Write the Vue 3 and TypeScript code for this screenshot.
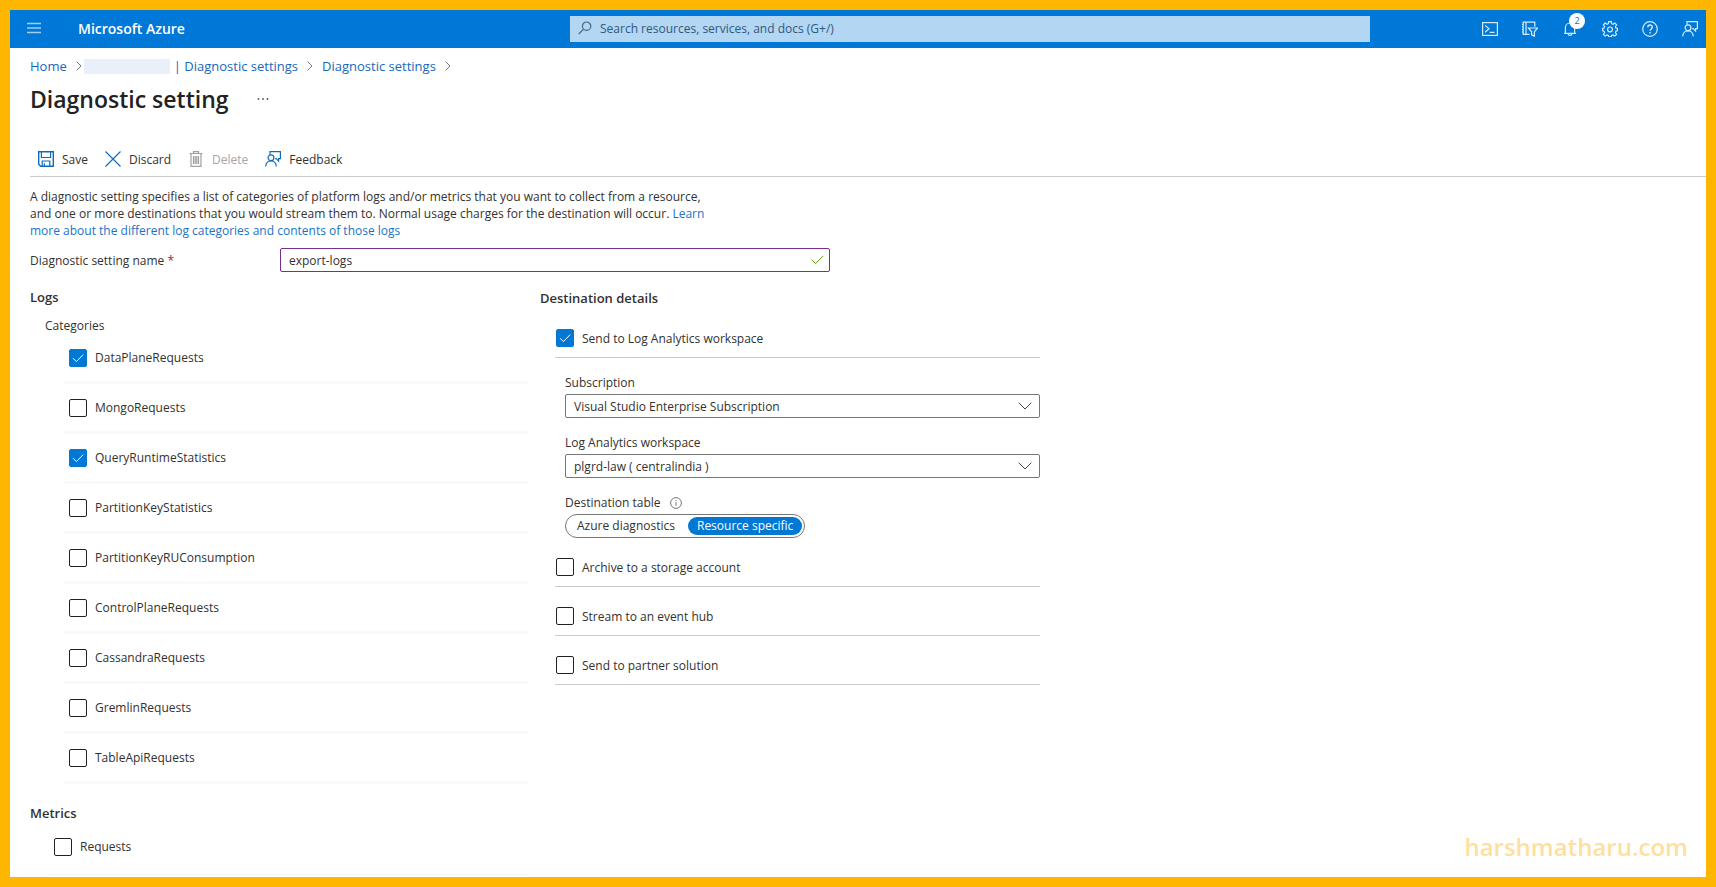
<script setup lang="ts">
import { ref } from 'vue'

interface Option {
  id: string
  label: string
  checked: boolean
}

const search = ref('')
const settingName = ref('export-logs')
const subscription = ref('Visual Studio Enterprise Subscription')
const workspace = ref('plgrd-law ( centralindia )')
const table = ref('resource')

const categories = ref<Option[]>([
  { id: 'data-plane', label: 'DataPlaneRequests', checked: true },
  { id: 'mongo', label: 'MongoRequests', checked: false },
  { id: 'query-runtime', label: 'QueryRuntimeStatistics', checked: true },
  { id: 'partition-key', label: 'PartitionKeyStatistics', checked: false },
  { id: 'partition-ru', label: 'PartitionKeyRUConsumption', checked: false },
  { id: 'control-plane', label: 'ControlPlaneRequests', checked: false },
  { id: 'cassandra', label: 'CassandraRequests', checked: false },
  { id: 'gremlin', label: 'GremlinRequests', checked: false },
  { id: 'table-api', label: 'TableApiRequests', checked: false },
])

const metrics = ref<Option[]>([{ id: 'requests', label: 'Requests', checked: false }])

const sendToWorkspace = ref(true)
const destinations = ref<Option[]>([
  { id: 'storage', label: 'Archive to a storage account', checked: false },
  { id: 'event-hub', label: 'Stream to an event hub', checked: false },
  { id: 'partner', label: 'Send to partner solution', checked: false },
])
</script>

<template>
  <div class="frame">
    <header class="topbar">
      <div class="brand">
        <button class="icon-button" type="button" aria-label="Show portal menu">
          <svg width="14" height="12" viewBox="0 0 14 12" fill="none" stroke="#9fcdf1" stroke-width="1.5">
            <path d="M0 1.5h14M0 6h14M0 10.5h14" />
          </svg>
        </button>
        <a class="brand-name" href="#">Microsoft Azure</a>
      </div>
      <label class="search">
        <svg width="14" height="14" viewBox="0 0 14 14" fill="none" stroke="#42688c" stroke-width="1.2">
          <circle cx="8.6" cy="5.2" r="4.2" />
          <path d="M5.6 8.2L0.8 13" />
        </svg>
        <input v-model="search" type="text" aria-label="Search" placeholder="Search resources, services, and docs (G+/)" />
      </label>
      <nav class="tools" aria-label="Portal tools">
        <button class="icon-button" type="button" aria-label="Cloud Shell">
          <svg viewBox="0 0 16 16">
            <rect x="0.6" y="1.6" width="14.8" height="12.8" />
            <path d="M3 4.4l4 3.4-4 3.4M7.6 11.4h5" />
          </svg>
        </button>
        <button class="icon-button" type="button" aria-label="Directories and subscriptions">
          <svg viewBox="0 0 16 16">
            <path d="M7.5 13.4H1.2V1.2h11.6v4.6M4 1.2v12.2M0 3.4h1.2M0 6h1.2M0 8.600h1.200M0 11.200h1.200" />
            <path d="M6.400 7h9.200L12.400 10.800v4.400l-2.800-1.400v-3z" />
          </svg>
        </button>
        <button class="icon-button bell" type="button" aria-label="Notifications, 2 new">
          <svg viewBox="0 0 16 16">
            <path d="M2 12.4h12M3.4 12.4V6.6a4.6 4.6 0 0 1 9.2 0v5.8M6 12.6c.4 2.4 3.6 2.4 4 0" />
          </svg>
          <span class="badge">2</span>
        </button>
        <button class="icon-button" type="button" aria-label="Settings">
          <svg viewBox="0 0 16 16">
            <path d="M6.700 0.700h2.600l.4 2 1.300.6 1.800-1.200 1.800 1.800-1.200 1.800.5 1.300 1.500.3v2.500l-1.500.4-.5 1.300 1.200 1.800-1.800 1.800-1.800-1.200-1.300.6-.4 1.300H6.700l-.4-1.300-1.300-.6-1.800 1.200-1.800-1.800 1.200-1.800-.6-1.300-1.300-.4V7.300l1.300-.3.6-1.300-1.200-1.800 1.800-1.800L5 3.300l1.300-.6z" />
            <circle cx="8" cy="8.400" r="2.400" />
          </svg>
        </button>
        <button class="icon-button" type="button" aria-label="Help">
          <svg viewBox="0 0 16 16">
            <circle cx="8" cy="8" r="7.300" />
            <path d="M5.800 6.300c0-3 4.500-2.900 4.500-.2 0 1.800-2.200 1.900-2.200 3.700M8.100 11v1.500" stroke-width="1.400" />
          </svg>
        </button>
        <button class="icon-button" type="button" aria-label="Feedback">
          <svg viewBox="0 0 16 16">
            <path d="M5 3.800V0.700h10.400v7h-1.800v2.400l-2.400-2.400h-1" />
            <circle cx="6" cy="6.700" r="2.900" />
            <path d="M0.700 15.500c.3-7.600 10.300-7.600 10.600 0" />
          </svg>
        </button>
      </nav>
    </header>

    <main class="page">
      <nav class="crumbs" aria-label="Breadcrumb">
        <a href="#">Home</a>
        <svg class="crumb-sep" viewBox="0 0 6 10"><path d="M0.700 0.700L5 5 0.700 9.300" /></svg>
        <span class="redacted"></span>
        <a href="#">| Diagnostic settings</a>
        <svg class="crumb-sep" viewBox="0 0 6 10"><path d="M0.700 0.700L5 5 0.700 9.300" /></svg>
        <a href="#">Diagnostic settings</a>
        <svg class="crumb-sep" viewBox="0 0 6 10"><path d="M0.700 0.700L5 5 0.700 9.300" /></svg>
      </nav>

      <div class="title-row">
        <h1>Diagnostic setting</h1>
        <button class="icon-button" type="button" aria-label="More">
          <svg width="12" height="4" viewBox="0 0 12 4" fill="#555">
            <circle cx="1.500" cy="2" r="0.900" /><circle cx="6" cy="2" r="0.900" /><circle cx="10.500" cy="2" r="0.900" />
          </svg>
        </button>
      </div>

      <div class="commands" role="toolbar">
        <button type="button">
          <svg viewBox="0 0 16 16">
            <path d="M0.700 0.700h14.600v14.600H2.700l-2-2z" stroke-width="1.400" />
            <path d="M3.400 0.700v5.800h9.200V0.700M4.200 15.300v-5.300h7.600v5.300M6.400 12.200v3" />
          </svg>
          Save
        </button>
        <button type="button">
          <svg viewBox="0 0 16 16"><path d="M0.500 0.500l15 15M15.500 0.500l-15 15" /></svg>
          Discard
        </button>
        <button type="button" disabled>
          <svg viewBox="0 0 16 16">
            <path d="M1.500 2.500h13M5.500 2.500V0.600h5v1.900M3 2.500v12.900h10V2.500M5.500 5v8M7.200 5v8M8.800 5v8M10.500 5v8" />
          </svg>
          Delete
        </button>
        <button type="button">
          <svg viewBox="0 0 16 16">
            <path d="M5 3.800V0.700h10.400v7h-1.800v2.400l-2.400-2.400h-1" />
            <circle cx="6" cy="6.700" r="2.900" />
            <path d="M0.700 15.500c.3-7.600 10.300-7.600 10.600 0" />
          </svg>
          Feedback
        </button>
      </div>

      <form class="form" @submit.prevent>
        <p class="intro">
          A diagnostic setting specifies a list of categories of platform logs and/or metrics that you want to collect from a resource,
          and one or more destinations that you would stream them to. Normal usage charges for the destination will occur.
          <a href="#">Learn more about the different log categories and contents of those logs</a>
        </p>

        <div class="name-row">
          <label for="setting-name">Diagnostic setting name <span class="required">*</span></label>
          <div class="name-box">
            <input id="setting-name" v-model="settingName" type="text" />
            <svg width="13" height="10" viewBox="0 0 13 10" fill="none" stroke="#57a300">
              <path d="M0.600 4.600l4 4L12.400 0.800" />
            </svg>
          </div>
        </div>

        <div class="columns">
          <div class="sources">
            <h2>Logs</h2>
            <h3>Categories</h3>
            <ul class="categories">
              <li v-for="item in categories" :key="item.id">
                <label class="check">
                  <input v-model="item.checked" type="checkbox" />
                  <svg v-if="item.checked" viewBox="0 0 18 18"><path d="M4 9.200l3.400 3.400L14.200 5.600" /></svg>
                  <span>{{ item.label }}</span>
                </label>
              </li>
            </ul>
            <h2>Metrics</h2>
            <ul class="metrics">
              <li v-for="item in metrics" :key="item.id">
                <label class="check">
                  <input v-model="item.checked" type="checkbox" />
                  <svg v-if="item.checked" viewBox="0 0 18 18"><path d="M4 9.200l3.400 3.400L14.200 5.600" /></svg>
                  <span>{{ item.label }}</span>
                </label>
              </li>
            </ul>
          </div>

          <div class="targets">
            <h2>Destination details</h2>
            <div class="target">
              <label class="check">
                <input v-model="sendToWorkspace" type="checkbox" />
                <svg v-if="sendToWorkspace" viewBox="0 0 18 18"><path d="M4 9.200l3.400 3.400L14.200 5.600" /></svg>
                <span>Send to Log Analytics workspace</span>
              </label>
            </div>

            <div class="workspace">
              <div class="field">
                <label for="subscription">Subscription</label>
                <div class="select">
                  <select id="subscription" v-model="subscription">
                    <option>Visual Studio Enterprise Subscription</option>
                  </select>
                  <svg viewBox="0 0 14 8"><path d="M0.700 0.700L7 7 13.300 0.700" /></svg>
                </div>
              </div>
              <div class="field">
                <label for="workspace">Log Analytics workspace</label>
                <div class="select">
                  <select id="workspace" v-model="workspace">
                    <option>plgrd-law ( centralindia )</option>
                  </select>
                  <svg viewBox="0 0 14 8"><path d="M0.700 0.700L7 7 13.300 0.700" /></svg>
                </div>
              </div>
              <fieldset class="field">
                <legend>
                  Destination table
                  <svg width="12" height="12" viewBox="0 0 12 12" fill="none" stroke="#777">
                    <circle cx="6" cy="6" r="5.400" />
                    <path d="M6 5.200v3.600M6 3v1.200" />
                  </svg>
                </legend>
                <div class="pills">
                  <label :class="{ active: table === 'azure' }">
                    <input v-model="table" type="radio" name="table" value="azure" />Azure diagnostics
                  </label>
                  <label :class="{ active: table === 'resource' }">
                    <input v-model="table" type="radio" name="table" value="resource" />Resource specific
                  </label>
                </div>
              </fieldset>
            </div>

            <div v-for="item in destinations" :key="item.id" class="target">
              <label class="check">
                <input v-model="item.checked" type="checkbox" />
                <svg v-if="item.checked" viewBox="0 0 18 18"><path d="M4 9.200l3.400 3.400L14.200 5.600" /></svg>
                <span>{{ item.label }}</span>
              </label>
            </div>
          </div>
        </div>
      </form>
    </main>
    <div class="signature">harshmatharu.com</div>
  </div>
</template>

<style>
body {
  margin: 0;
}
</style>

<style scoped>
.frame {
  position: relative;
  box-sizing: border-box;
  min-height: 100vh;
  border: 10px solid #ffb600;
  background: #fff;
  color: #323130;
  font: 12px/17px "Open Sans", "Noto Sans", sans-serif;
}

a {
  color: #1868b8;
  text-decoration: none;
}

button,
input,
select {
  font: inherit;
  color: inherit;
}

.icon-button {
  display: flex;
  padding: 0;
  border: 0;
  background: none;
}

.topbar {
  display: grid;
  grid-template-columns: 560px minmax(0, 800px) 1fr;
  align-items: center;
  height: 38px;
  background: #0078d7;
}

.brand {
  display: flex;
  align-items: center;
  gap: 37px;
  padding: 0 0 2px 17px;
}

.brand-name {
  color: #fff;
  font-size: 14px;
  font-weight: 600;
}

.search {
  display: flex;
  align-items: center;
  gap: 8px;
  box-sizing: border-box;
  height: 26px;
  padding: 0 8px 2px;
  background: #b3d6f3;
}

.search input {
  flex: 1;
  min-width: 0;
  padding: 0;
  border: 0;
  outline: 0;
  background: none;
}

.search input::placeholder {
  color: #2f587f;
}

.tools {
  display: flex;
  justify-content: flex-end;
  gap: 24px;
  padding-right: 8px;
}

.tools svg {
  width: 16px;
  height: 16px;
  fill: none;
  stroke: #d6ebfa;
  stroke-width: 1.2;
}

.bell {
  position: relative;
}

.badge {
  position: absolute;
  left: 7px;
  bottom: 8px;
  width: 16px;
  border-radius: 8px;
  background: #fff;
  color: #33669a;
  font-size: 9px;
  line-height: 16px;
  text-align: center;
}

.page {
  padding-left: 20px;
}

.crumbs {
  display: flex;
  align-items: center;
  height: 20px;
  padding-top: 8px;
  font-size: 13px;
}

.crumb-sep {
  width: 6px;
  height: 10px;
  margin: 0 9px;
  fill: none;
  stroke: #777;
}

.redacted {
  width: 86px;
  height: 15px;
  margin: 0 4px 0 -7px;
  background: #e9f0fa;
}

.title-row {
  display: flex;
  align-items: center;
  gap: 28px;
  height: 46px;
}

h1 {
  margin: 0;
  color: #222;
  font-size: 23px;
  font-weight: 600;
  line-height: 32px;
}

.commands {
  display: flex;
  gap: 17px;
  height: 34px;
  margin-top: 20px;
  padding-left: 8px;
  border-bottom: 1px solid #ccc;
}

.commands button {
  display: flex;
  align-items: center;
  gap: 8px;
  padding: 0;
  border: 0;
  background: none;
}

.commands button:disabled {
  color: #a6a6a6;
}

.commands svg {
  width: 16px;
  height: 16px;
  fill: none;
  stroke: #0f6cbd;
  stroke-width: 1.2;
}

.commands button:disabled svg {
  stroke: #a0a0a0;
}

.form {
  max-width: 1010px;
  padding-top: 11px;
}

.intro {
  max-width: 690px;
  margin: 0;
}

.intro a {
  color: #1a73c7;
}

.name-row {
  display: grid;
  grid-template-columns: 250px minmax(0, 550px);
  align-items: center;
  margin-top: 9px;
}

.required {
  color: #a4262c;
}

.name-box {
  box-sizing: border-box;
  display: flex;
  align-items: center;
  height: 24px;
  padding: 0 5px 0 8px;
  border: 1px solid #7b2e8c;
  border-radius: 2px;
}

.name-box input {
  flex: 1;
  min-width: 0;
  padding: 0;
  border: 0;
  outline: 0;
  background: none;
}

.columns {
  display: grid;
  grid-template-columns: 498fr 500fr;
  gap: 12px;
  margin-top: 15px;
}

h2 {
  margin: 0;
  font-size: 13px;
  font-weight: 600;
  line-height: 20px;
}

h3 {
  margin: 9px 0 0 15px;
  font-size: 12px;
  font-weight: 400;
  line-height: 20px;
}

ul {
  margin: 0;
  padding: 0;
  list-style: none;
}

.check {
  display: inline-grid;
  grid-template-columns: 18px auto;
  align-items: center;
  gap: 8px;
}

.check input {
  grid-area: 1 / 1;
  box-sizing: border-box;
  width: 18px;
  height: 18px;
  margin: 0;
  appearance: none;
  border: 1px solid #222;
  border-radius: 2px;
}

.check input:checked {
  border-color: #0078d4;
  background: #0078d4;
}

.check svg {
  grid-area: 1 / 1;
  width: 18px;
  height: 18px;
  fill: none;
  stroke: #fff;
  pointer-events: none;
}

.check span {
  grid-area: 1 / 2;
}

.categories {
  margin: -2px 0 19px 34px;
}

.categories li {
  display: flex;
  align-items: center;
  box-sizing: border-box;
  height: 50px;
  padding-left: 5px;
  border-bottom: 3px solid #f9f9f9;
}

.metrics {
  margin-left: 18px;
}

.metrics li {
  padding: 15px 0 13px 6px;
  line-height: 18px;
  border-bottom: 2px solid #f9f9f9;
}

.targets > h2 {
  padding-top: 1px;
}

.target {
  display: flex;
  align-items: flex-end;
  box-sizing: border-box;
  height: 49px;
  margin-left: 15px;
  padding: 0 0 10px 1px;
  border-bottom: 1px solid #ccc;
}

.targets > h2 + .target {
  height: 50px;
}

.workspace {
  display: grid;
  gap: 16px;
  padding: 16px 0 0 25px;
}

.field {
  display: grid;
  gap: 3px;
  min-width: 0;
  margin: 0;
  padding: 0;
  border: 0;
}

.select {
  display: grid;
  align-items: center;
}

.select select {
  grid-area: 1 / 1;
  height: 24px;
  padding: 0 32px 0 8px;
  appearance: none;
  border: 1px solid #777;
  border-radius: 2px;
  background: #fff;
}

.select svg {
  grid-area: 1 / 1;
  justify-self: end;
  width: 14px;
  height: 8px;
  margin-right: 8px;
  fill: none;
  stroke: #444;
  pointer-events: none;
}

legend {
  display: flex;
  align-items: center;
  gap: 9px;
  padding: 0 0 3px;
}

.pills {
  justify-self: start;
  display: flex;
  gap: 4px;
  box-sizing: border-box;
  height: 24px;
  padding: 2px;
  border: 1px solid #777;
  border-radius: 12px;
}

.pills label {
  padding: 0 9px;
  border-radius: 9px;
  line-height: 18px;
}

.pills .active {
  background: #0078d4;
  color: #fff;
}

.pills input {
  position: absolute;
  opacity: 0;
}

.signature {
  position: absolute;
  right: 18px;
  bottom: 14px;
  color: #ffdf9e;
  font-size: 24px;
  font-weight: 600;
  line-height: 32px;
}
</style>
